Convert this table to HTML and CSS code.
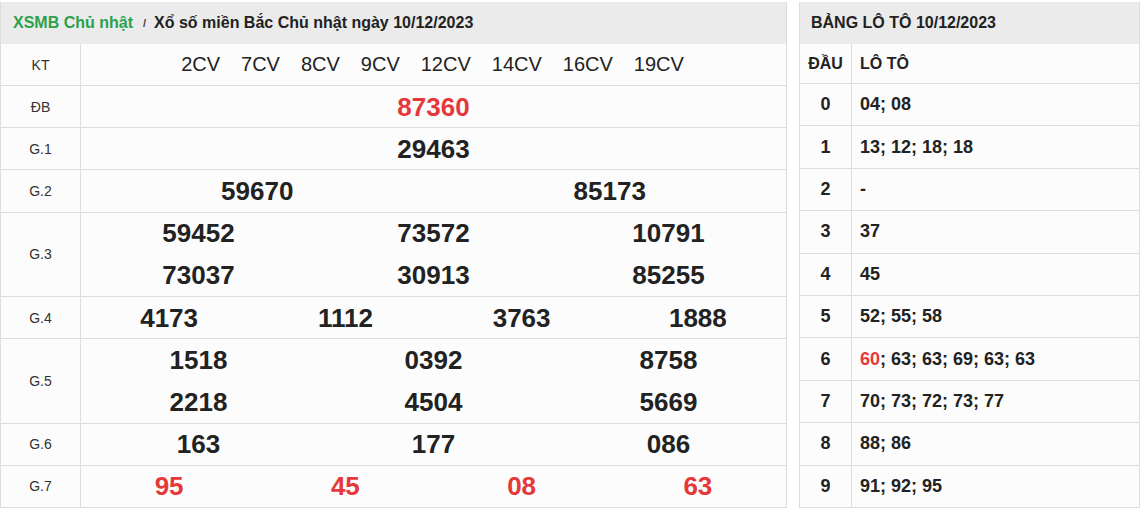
FILE: index.html
```html
<!DOCTYPE html>
<html lang="vi">
<head>
<meta charset="utf-8">
<title>XSMB Chủ nhật</title>
<link rel="stylesheet" href="styles.css">
</head>
<body>
<div class="page">
  <section class="results">
    <div class="head">
      <a class="crumb" href="#">XSMB Chủ nhật</a>
      <span class="sep">/</span>
      <h1 class="title">Xổ số miền Bắc Chủ nhật ngày 10/12/2023</h1>
    </div>
    <div class="row row-kt">
      <div class="lbl">KT</div>
      <div class="val codes">
        <span>2CV</span><span>7CV</span><span>8CV</span><span>9CV</span><span>12CV</span><span>14CV</span><span>16CV</span><span>19CV</span>
      </div>
    </div>
    <div class="row">
      <div class="lbl">ĐB</div>
      <div class="val g1"><span class="num red">87360</span></div>
    </div>
    <div class="row">
      <div class="lbl">G.1</div>
      <div class="val g1"><span class="num">29463</span></div>
    </div>
    <div class="row">
      <div class="lbl">G.2</div>
      <div class="val g2"><span class="num">59670</span><span class="num">85173</span></div>
    </div>
    <div class="row double">
      <div class="lbl">G.3</div>
      <div class="val g3">
        <span class="num">59452</span><span class="num">73572</span><span class="num">10791</span>
        <span class="num">73037</span><span class="num">30913</span><span class="num">85255</span>
      </div>
    </div>
    <div class="row">
      <div class="lbl">G.4</div>
      <div class="val g4"><span class="num">4173</span><span class="num">1112</span><span class="num">3763</span><span class="num">1888</span></div>
    </div>
    <div class="row double">
      <div class="lbl">G.5</div>
      <div class="val g3">
        <span class="num">1518</span><span class="num">0392</span><span class="num">8758</span>
        <span class="num">2218</span><span class="num">4504</span><span class="num">5669</span>
      </div>
    </div>
    <div class="row">
      <div class="lbl">G.6</div>
      <div class="val g3"><span class="num">163</span><span class="num">177</span><span class="num">086</span></div>
    </div>
    <div class="row">
      <div class="lbl">G.7</div>
      <div class="val g4"><span class="num red">95</span><span class="num red">45</span><span class="num red">08</span><span class="num red">63</span></div>
    </div>
  </section>

  <section class="loto">
    <div class="head">
      <h2 class="loto-title">BẢNG LÔ TÔ 10/12/2023</h2>
    </div>
    <div class="lrow lrow-head"><div class="dau">ĐẦU</div><div class="lt">LÔ TÔ</div></div>
    <div class="lrow"><div class="dau">0</div><div class="lt">04; 08</div></div>
    <div class="lrow"><div class="dau">1</div><div class="lt">13; 12; 18; 18</div></div>
    <div class="lrow"><div class="dau">2</div><div class="lt">-</div></div>
    <div class="lrow"><div class="dau">3</div><div class="lt">37</div></div>
    <div class="lrow"><div class="dau">4</div><div class="lt">45</div></div>
    <div class="lrow"><div class="dau">5</div><div class="lt">52; 55; 58</div></div>
    <div class="lrow"><div class="dau">6</div><div class="lt"><span class="red">60</span>; 63; 63; 69; 63; 63</div></div>
    <div class="lrow"><div class="dau">7</div><div class="lt">70; 73; 72; 73; 77</div></div>
    <div class="lrow"><div class="dau">8</div><div class="lt">88; 86</div></div>
    <div class="lrow"><div class="dau">9</div><div class="lt">91; 92; 95</div></div>
  </section>
</div>
</body>
</html>
```

FILE: styles.css
```css
* { box-sizing: border-box; }

html, body {
  margin: 0;
  padding: 0;
  background: #ffffff;
}

body {
  font-family: "Liberation Sans", Arial, sans-serif;
  color: #222222;
}

.page {
  display: flex;
  align-items: flex-start;
  gap: 12px;
  padding-top: 2px;
}

.results {
  width: 787px;
  flex: none;
  border-left: 1px solid #dddddd;
  border-right: 1px solid #dddddd;
  background: #fcfcfc;
}

.head {
  height: 42px;
  background: #ebebeb;
  display: flex;
  align-items: center;
  padding-left: 12px;
}

.crumb {
  color: #2ba24c;
  font-weight: bold;
  font-size: 16px;
  text-decoration: none;
}

.sep {
  color: #444444;
  font-size: 11px;
  font-weight: bold;
  margin: 0 8px 0 10px;
}

.title {
  margin: 0;
  font-size: 16px;
  font-weight: bold;
  color: #222222;
}

.row {
  display: flex;
  height: 42.2px;
  border-bottom: 1px solid #dddddd;
}

.row-kt {
  height: 42px;
}

.double {
  height: 84.4px;
}

.lbl {
  width: 80px;
  flex: none;
  border-right: 1px solid #dddddd;
  display: flex;
  align-items: center;
  justify-content: center;
  font-size: 14px;
  color: #333333;
}

.val {
  flex: 1;
  display: grid;
  align-items: center;
  justify-items: center;
}

.codes {
  display: flex;
  justify-content: center;
  gap: 21px;
  font-size: 20px;
  color: #222222;
  padding-right: 2px;
}

.g1 { grid-template-columns: 1fr; }
.g2 { grid-template-columns: repeat(2, 1fr); }
.g3 { grid-template-columns: repeat(3, 1fr); }
.g4 { grid-template-columns: repeat(4, 1fr); }

.num {
  font-size: 26px;
  font-weight: bold;
  color: #222222;
  line-height: 30px;
}

.red { color: #e5383b; }

.loto {
  width: 341px;
  flex: none;
  border-left: 1px solid #dddddd;
  border-right: 1px solid #dddddd;
  background: #fcfcfc;
}

.loto .head {
  padding-left: 11px;
}

.loto-title {
  margin: 0;
  font-size: 16px;
  font-weight: bold;
  color: #222222;
}

.lrow {
  display: flex;
  height: 42.4px;
  border-bottom: 1px solid #dddddd;
  font-size: 18px;
  font-weight: bold;
}

.lrow-head {
  height: 40px;
  font-size: 16px;
}

.dau {
  width: 52px;
  flex: none;
  border-right: 1px solid #dddddd;
  display: flex;
  align-items: center;
  justify-content: center;
}

.lt {
  flex: 1;
  display: flex;
  align-items: center;
  padding-left: 8px;
}
```
